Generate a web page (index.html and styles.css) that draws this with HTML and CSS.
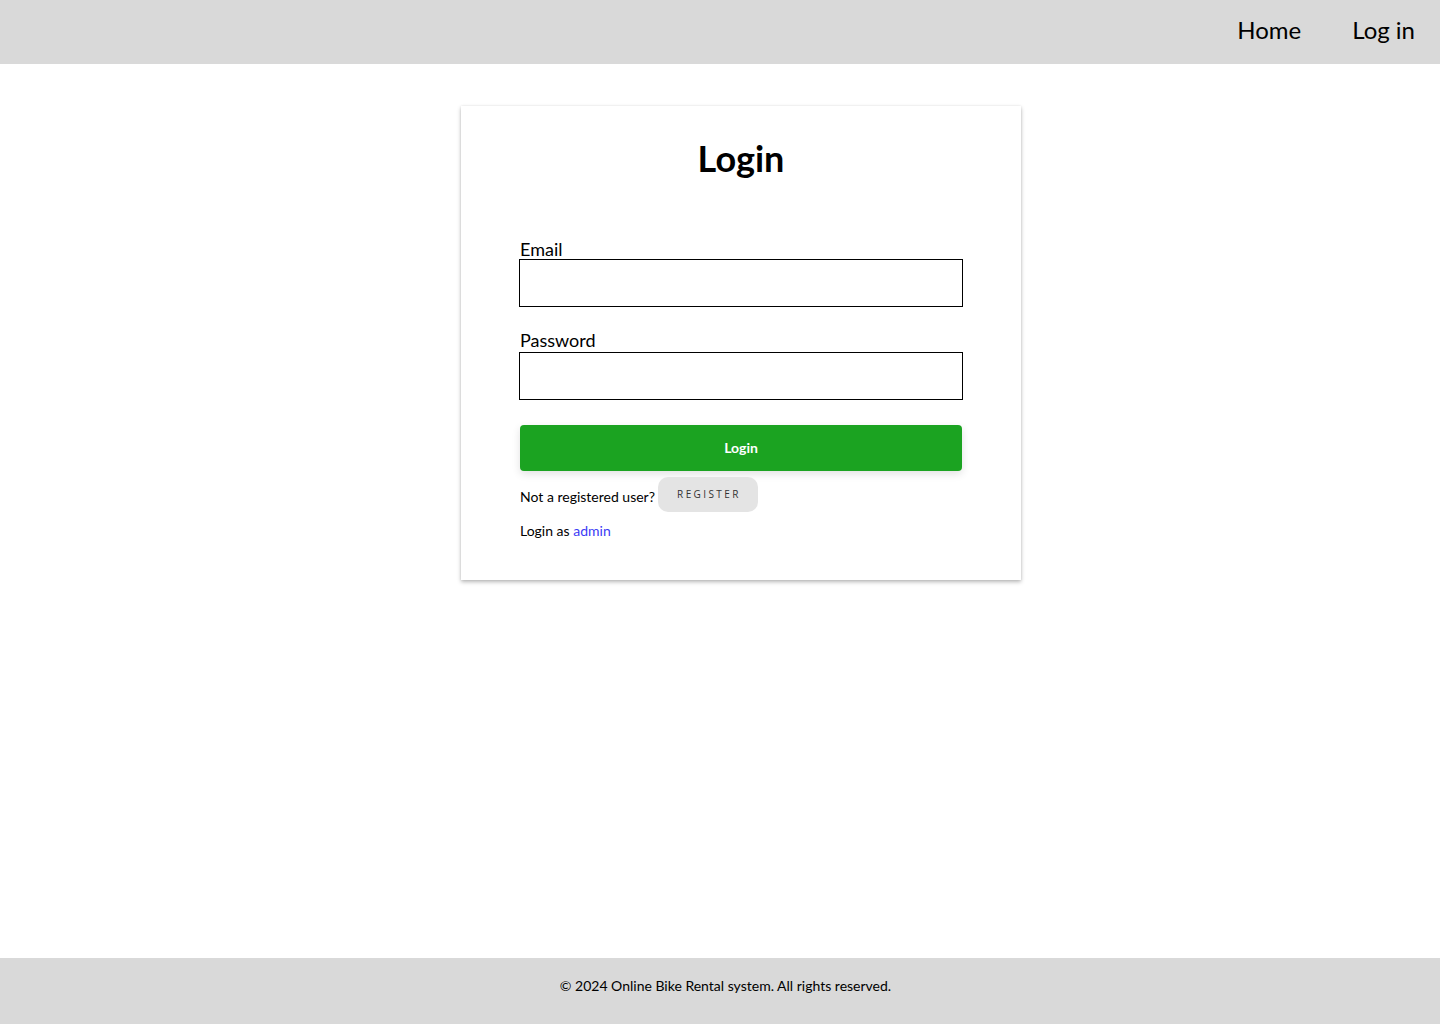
FILE: index.html
```html
<!DOCTYPE html>
<html lang="en">
<head>
<meta charset="utf-8">
<title>Login</title>
<link rel="stylesheet" href="styles.css">
</head>
<body>
<div class="page">
  <header class="topbar">
    <nav class="nav">
      <a class="nav-link" href="#">Home</a>
      <a class="nav-link" href="#">Log in</a>
    </nav>
  </header>
  <main class="main">
    <div class="card">
      <h1 class="title">Login</h1>
      <form class="form">
        <label class="label" for="email">Email</label>
        <input class="input" id="email" type="email">
        <label class="label label-pw" for="password">Password</label>
        <input class="input" id="password" type="password">
        <button class="btn-login" type="button">Login</button>
      </form>
      <div class="register-row">
        <span>Not a registered user?</span>
        <button class="btn-register" type="button">REGISTER</button>
      </div>
      <p class="admin-row">Login as <a class="admin-link" href="#">admin</a></p>
    </div>
  </main>
  <footer class="footer">© 2024 Online Bike Rental system. All rights reserved.</footer>
</div>
</body>
</html>
```
FILE: styles.css
```css
* { box-sizing: border-box; }
html, body { margin: 0; padding: 0; }
body {
  font-family: Lato, "Open Sans", sans-serif;
  color: #000;
  background: #fff;
}
.page {
  min-height: 1024px;
  display: flex;
  flex-direction: column;
}
.topbar {
  height: 64px;
  background: #d9d9d9;
  display: flex;
  justify-content: flex-end;
  align-items: center;
  padding-bottom: 4px;
}
.nav {
  display: flex;
  gap: 51px;
  padding-right: 25px;
}
.nav-link {
  font-size: 24px;
  color: #000;
  text-decoration: none;
  line-height: 30px;
}
.main {
  flex: 1;
  display: flex;
  justify-content: center;
  padding-left: 42px;
  padding-top: 42px;
}
.card {
  width: 560px;
  height: 474px;
  padding: 28px 58px 0;
  background: #fff;
  box-shadow: 0 2px 4px rgba(0,0,0,0.28), 0 0 2px rgba(0,0,0,0.08);
}
.title {
  margin: 0;
  text-align: center;
  font-size: 36px;
  font-weight: 700;
  line-height: 48px;
}
.form {
  display: flex;
  flex-direction: column;
  margin-top: 58px;
}
.label {
  font-size: 18px;
  line-height: 19px;
  padding-left: 1px;
}
.label-pw { margin-top: 24px; padding-bottom: 2px; }
.input {
  width: 444px;
  height: 48px;
  border: 1px solid #000;
  margin: 0;
  padding: 0 8px;
  font-family: inherit;
  font-size: 16px;
}
.btn-login {
  margin: 25px 1px 0;
  height: 46px;
  border: none;
  border-radius: 4px;
  background: #1ba321;
  color: #fff;
  font-family: inherit;
  font-weight: 700;
  font-size: 14px;
  padding: 0 0 2px;
  box-shadow: 0 3px 8px rgba(0,0,0,0.12);
}
.register-row {
  display: flex;
  align-items: center;
  gap: 3px;
  margin-top: 6px;
  padding-left: 1px;
  font-size: 14px;
}
.register-row span { padding-top: 3px; }
.btn-register {
  width: 100px;
  height: 35px;
  border: none;
  border-radius: 10px;
  background: #e4e4e4;
  color: #333;
  font-family: "Open Sans", Lato, sans-serif;
  font-size: 10px;
  letter-spacing: 2.4px;
  padding: 0 0 2px 2px;
}
.admin-row {
  margin: 10px 0 0 1px;
  font-size: 14px;
  line-height: 18px;
}
.admin-link {
  color: #3b3bf5;
  text-decoration: none;
}
.footer {
  height: 66px;
  background: #d9d9d9;
  display: flex;
  align-items: center;
  justify-content: center;
  padding-left: 11px;
  padding-bottom: 12px;
  font-size: 14px;
}
```
